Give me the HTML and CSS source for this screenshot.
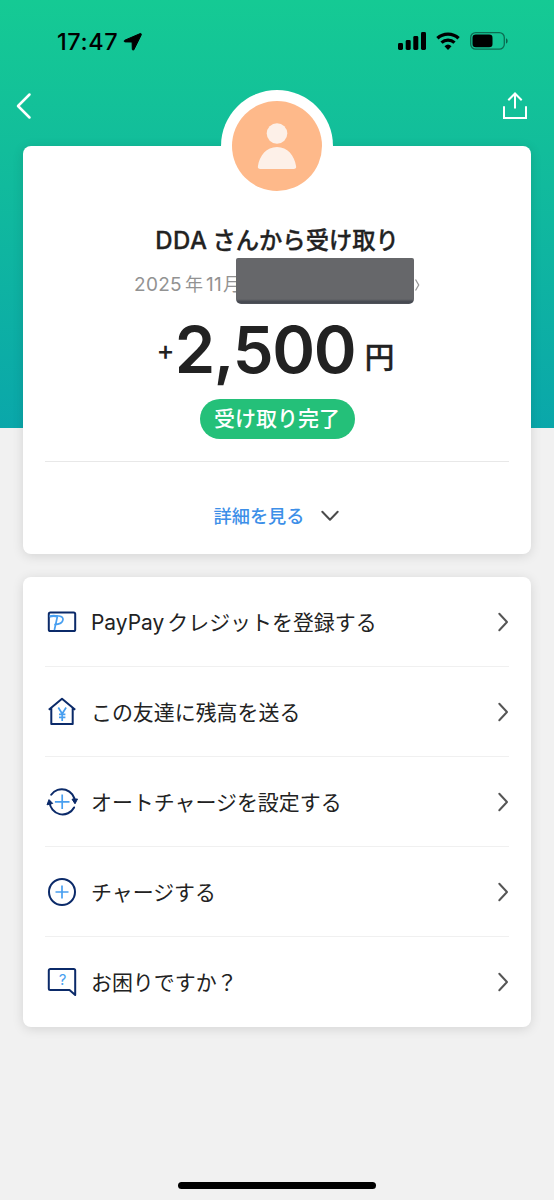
FILE: index.html
```
<!DOCTYPE html>
<html lang="ja">
<head>
<meta charset="utf-8">
<title>受け取り完了</title>
<link rel="stylesheet" href="styles.css">
</head>
<body>
<div class="screen">
  <header class="status">
    <div class="clock"><span>17:47</span>
      <svg width="20" height="20" viewBox="0 0 20 20"><path d="M17.200 1.600 1.800 8.200c-1 .5-.8 1.600.3 1.700l7 .1.2 7.200c.1 1.100 1.200 1.300 1.700.3L18.200 3c.4-1-.1-1.700-1-1.400z" fill="#000" stroke="#000" stroke-linejoin="round"/></svg>
    </div>
    <div class="signals">
      <svg width="28" height="20" viewBox="0 0 28 20"><rect x="0" y="12" width="5" height="7" rx="1.400"/><rect x="7.700" y="9" width="5" height="10" rx="1.400"/><rect x="15.300" y="5" width="5" height="14" rx="1.400"/><rect x="23" y="1" width="5" height="18" rx="1.400"/></svg>
      <svg width="24" height="20" viewBox="0 0 24 20"><g fill="none" stroke="#000" stroke-width="3.300"><path d="M1.400 7.300a15.500 15.500 0 0 1 21.200 0"/><path d="M5.500 11.600a9.600 9.600 0 0 1 13 0"/></g><path d="M8.500 15.200a5.200 5.200 0 0 1 7 0L12 18.900z"/></svg>
      <svg width="38" height="20" viewBox="0 0 38 20"><rect x=".7" y="1.600" width="33.600" height="16.600" rx="5" fill="none" stroke="#000" stroke-opacity=".45" stroke-width="1.300"/><rect x="2.500" y="3.500" width="20" height="12.800" rx="3.300"/><path d="M36 7.200v5.400c2.200-.8 2.200-4.600 0-5.400z" opacity=".5"/></svg>
    </div>
  </header>
  <nav class="nav">
    <svg width="18" height="28" viewBox="0 0 18 28"><path d="M14.500 2.500 3 14l11.500 11.500" fill="none" stroke="#fff" stroke-width="2.500" stroke-linecap="round" stroke-linejoin="round"/></svg>
    <svg width="26" height="28" viewBox="0 0 26 28"><path d="M2 14.300v11.700h22V14.300M13 16.500V1.700M6.300 8.200 13 1.500l6.700 6.700" fill="none" stroke="#fff" stroke-width="2"/></svg>
  </nav>
  <main class="content">
    <section class="card summary">
      <div class="avatar"><svg width="90" height="90" viewBox="0 0 90 90"><circle cx="45" cy="45" r="45" fill="#feb98a"/><circle cx="45" cy="32.500" r="10.300" fill="#fdf0e8"/><path d="M28.300 68c-1.800 0-2.700-1-2.400-2.700C27.500 54.500 34.500 46 45 46s17.500 8.500 19.100 19.300c.3 1.700-.6 2.700-2.400 2.700z" fill="#fdf0e8"/></svg></div>
      <h1 class="title"><span class="name">DDA</span>さんから受け取り</h1>
      <div class="date"><span class="num">2025</span><span class="kan">年</span><span class="num">11</span><span class="kan last">月</span><span class="redaction"></span><svg width="6" height="16" viewBox="0 0 6 16"><path d="M1.500 2.500 4.700 8l-3.200 5.500" fill="none" stroke="#999" stroke-width="1.300"/></svg></div>
      <div class="amount"><span class="plus">+</span><span class="value">2,500</span><span class="unit">円</span></div>
      <div class="badge">受け取り完了</div>
      <a class="details"><span>詳細を見る</span><svg width="20" height="12" viewBox="0 0 20 12"><path d="m2.300 1.800 7.700 8 7.700-8" fill="none" stroke="#4b4b4b" stroke-width="2" stroke-linecap="round" stroke-linejoin="round"/></svg></a>
    </section>
    <section class="card menu">
      <a class="row"><svg class="icon" width="32" height="32" viewBox="0 0 32 32"><rect x="2.800" y="6.500" width="26.400" height="18.600" rx="1.600" class="navy"/><path d="M3.700 10.400c7-1.300 13.700-.8 13.300 3.200-.4 3.500-4 4.800-8.800 5M11.400 10.500 8.400 24" class="blue"/><path d="M3.700 10.500q4-1.200 8 0" class="blue thick"/></svg><span><span class="latin">PayPay</span>クレジットを登録する</span></a>
      <a class="row"><svg class="icon" width="32" height="32" viewBox="0 0 32 32"><path d="M2.800 13.700 16 2.700l13.200 11M5.300 12v16h21.400V12" class="navy"/><path d="m12.300 11.500 3.900 6.300 3.900-6.300M16.200 17.800v7.200M13 18.300h6.400M13 21.300h6.400" class="blue"/></svg><span>この友達に残高を送る</span></a>
      <a class="row"><svg class="icon" width="32" height="32" viewBox="0 0 32 32"><path d="M5.200 8.800a13 13 0 0 1 23.700 7.200M28.100 21.500A13 13 0 0 1 3.600 15.800" class="navy round"/><path d="m26 13.200 3 4.600 2.500-4.800zM1 18.800l2-5.200 3.700 3.800z" class="navy filled"/><path d="M16.200 8.500v14.600M8.900 15.800h14.600" class="blue"/></svg><span>オートチャージを設定する</span></a>
      <a class="row"><svg class="icon" width="32" height="32" viewBox="0 0 32 32"><circle cx="16" cy="16" r="13" class="navy"/><path d="M16 9.500v13M9.500 16h13" class="blue"/></svg><span>チャージする</span></a>
      <a class="row"><svg class="icon" width="32" height="32" viewBox="0 0 32 32"><path d="M29.200 29V4.500a1.500 1.500 0 0 0-1.500-1.500H4.300A1.500 1.500 0 0 0 2.800 4.500v18A1.500 1.500 0 0 0 4.300 24h19.200z" class="navy"/><text x="16.500" y="19" text-anchor="middle" class="question">?</text></svg><span>お困りですか？</span></a>
    </section>
  </main>
  <div class="home"></div>
</div>
<script src="rows.js"></script>
</body>
</html>
```
FILE: rows.js
```
document.querySelectorAll('.row').forEach(row => {
  row.insertAdjacentHTML('beforeend', '<svg class="chevron" width="14" height="22" viewBox="0 0 14 22"><path d="m3.300 2.800 7.700 8.200-7.700 8.200" fill="none" stroke="#555" stroke-width="2" stroke-linecap="round" stroke-linejoin="round"/></svg>');
});
```
FILE: styles.css
```
* { box-sizing: border-box; }
body { margin: 0; background: #f1f1f1; color: #222; font-family: Inter, "Noto Sans CJK JP", sans-serif; }
svg { display: block; flex-shrink: 0; }
.screen { height: 1200px; display: flex; flex-direction: column; background: linear-gradient(#15ca94 0, #12bd9b 150px, #0aa7aa 428px) 0 0 / 100% 428px no-repeat #f1f1f1; }
.status { height: 82px; padding: 31px 46px 0 57px; display: flex; justify-content: space-between; align-items: flex-start; }
.clock { display: flex; gap: 5px; height: 20px; align-items: center; font-size: 23.500px; font-weight: 550; line-height: 20px; color: #000; letter-spacing: .6px; margin-top: 1px; }
.signals { display: flex; gap: 10px; }
.nav { height: 64px; padding: 10px 26px 0 15px; display: flex; justify-content: space-between; }
.content { padding: 0 23px; display: flex; flex-direction: column; gap: 23px; }
.card { background: #fff; border-radius: 8px; box-shadow: 0 2px 12px rgba(0,0,0,.12); }
.summary { height: 408px; display: flex; flex-direction: column; align-items: center; }
.avatar { width: 112px; height: 112px; padding: 11px; margin-top: -56px; border-radius: 50%; background: #fff; flex-shrink: 0; }
.title { margin: 22px 0 0; font-size: 23.300px; line-height: 34px; font-weight: 500; white-space: nowrap; -webkit-text-stroke: .3px #222; }
.name { font-weight: 550; font-size: 24px; letter-spacing: .5px; margin-right: 5px; }
.date { width: 286px; height: 47px; display: flex; align-items: center; font-size: 19px; color: #929292; line-height: 47px; margin-top: 3px; }
.num { letter-spacing: .3px; }
.kan { margin-left: 3px; margin-right: 3px; font-size: 18px; }
.kan.last { margin: 0 -5px 0 1px; }
.redaction { width: 178px; height: 46px; flex-shrink: 0; margin-top: -8px; position: relative; border-radius: 2px 2px 5px 5px; background: linear-gradient(#66676a 0, #66676a 41px, #42464e 44px, #53565d); }
.amount { height: 75px; margin-top: 4px; display: flex; align-items: baseline; line-height: 75px; font-weight: 600; white-space: nowrap; margin-right: 3px; }
.plus { font-size: 27px; font-weight: 500; line-height: 48px; position: relative; top: -13px; }
.value { font-size: 65px; letter-spacing: -1.300px; }
.unit { font-size: 30px; font-weight: 500; line-height: 50px; margin-left: 9px; position: relative; top: -5px; -webkit-text-stroke: .3px #222; }
.badge { width: 155px; height: 40px; margin-top: 12px; border-radius: 20px; background: #24c079; color: #fff; font-size: 21px; font-weight: 500; line-height: 40px; text-align: center; flex-shrink: 0; }
.details { width: 464px; margin-top: 22px; padding-top: 16px; border-top: 1px solid #e8e8e8; flex: 1; display: flex; justify-content: center; align-items: center; gap: 16px; font-size: 18.200px; font-weight: 500; line-height: 26px; color: #3d8fe8; }
.menu { padding: 0 22px; height: 450px; }
.row { height: 90px; display: flex; align-items: center; font-size: 20.950px; line-height: 30px; border-bottom: 1px solid #f0f0f0; white-space: nowrap; padding-left: 1px; }
.row:last-child { border: 0; }
.icon { margin-right: 13px; }
.row > span { margin-top: 2px; }
.row:last-child > span { margin-top: 1px; }
.chevron { margin-left: auto; margin-right: -1px; }
.latin { margin-right: 3px; }
.navy { fill: none; stroke: #0b2a69; stroke-width: 2; stroke-linejoin: round; }
.navy.filled { fill: #0b2a69; stroke-width: 1; }
.round { stroke-linecap: round; }
.blue { fill: none; stroke: #489ff0; stroke-width: 1.700; }
.blue.thick { stroke-width: 2.200; }
.question { fill: #489ff0; font: 15px Inter, sans-serif; }
.home { width: 198px; height: 7px; border-radius: 4px; background: #000; margin: auto auto 11px; }
```
